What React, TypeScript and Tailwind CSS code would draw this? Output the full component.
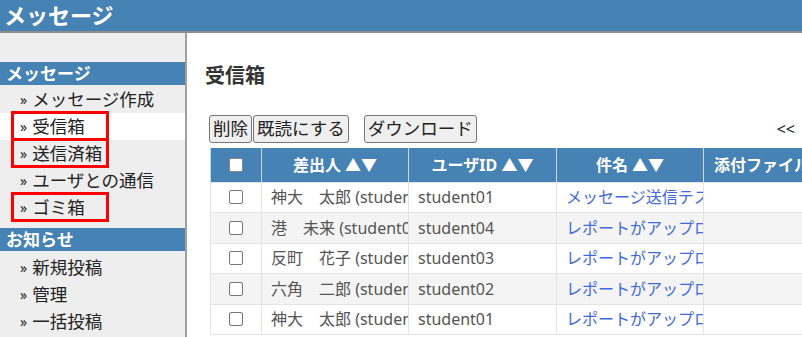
import React from 'react';

const font = { fontFamily: '"Noto Sans", "Noto Sans CJK JP", sans-serif' };

type NavItem = { label: string; active?: boolean; marked?: boolean };

const messageNav: NavItem[] = [
  { label: 'メッセージ作成' },
  { label: '受信箱', active: true, marked: true },
  { label: '送信済箱', marked: true },
  { label: 'ユーザとの通信' },
  { label: 'ゴミ箱', marked: true },
];

const noticeNav: NavItem[] = [{ label: '新規投稿' }, { label: '管理' }, { label: '一括投稿' }];

const rows = [
  { from: '神大　太郎 (student01)', id: 'student01', subject: 'メッセージ送信テスト' },
  { from: '港　未来 (student04)', id: 'student04', subject: 'レポートがアップロードされました' },
  { from: '反町　花子 (student03)', id: 'student03', subject: 'レポートがアップロードされました' },
  { from: '六角　二郎 (student02)', id: 'student02', subject: 'レポートがアップロードされました' },
  { from: '神大　太郎 (student01)', id: 'student01', subject: 'レポートがアップロードされました' },
];

function NavLink({ item }: { item: NavItem }) {
  return (
    <li className={`relative flex h-[27px] items-center pl-[20px] text-[17.5px] text-[#222] ${item.active ? 'bg-white' : ''}`}>
      <span className="mr-[5px] text-[14px]">»</span>
      <span>{item.label}</span>
      {item.marked && (
        <span className="pointer-events-none absolute left-[11px] top-[-2px] bottom-[-1px] w-[98px] border-[3px] border-[#ff0000]" />
      )}
    </li>
  );
}

function SideHeading({ children }: { children: React.ReactNode }) {
  return (
    <div className="flex h-[23px] items-center bg-[#4682b4] pl-[6px] text-[17px] font-bold text-white">
      {children}
    </div>
  );
}

const btn = 'h-[28px] rounded-[3px] border border-[#767676] bg-[#efefef] px-[3px] text-[17.5px] leading-none text-[#222]';

export default function App() {
  return (
    <div className="flex h-[337px] w-[802px] flex-col overflow-hidden bg-white" style={font}>
      <header className="flex h-[33px] shrink-0 items-center border-b-2 border-[#8c8c8c] bg-[#4682b4] pl-[4px] text-[22px] font-bold text-white">
        メッセージ
      </header>

      <div className="flex min-h-0 flex-1">
        {/* Sidebar */}
        <aside className="w-[187px] shrink-0 border-r-2 border-[#a0a0a0] bg-[#eeeeee] pt-[29px]">
          <SideHeading>メッセージ</SideHeading>
          <ul className="mt-[1px]">
            {messageNav.map(it => <NavLink key={it.label} item={it} />)}
          </ul>
          <div className="mt-[7px]">
            <SideHeading>お知らせ</SideHeading>
          </div>
          <ul className="mt-[3px]">
            {noticeNav.map(it => <NavLink key={it.label} item={it} />)}
          </ul>
        </aside>

        {/* Main */}
        <main className="min-w-0 flex-1 overflow-hidden pl-[18px] pt-[30px]">
          <h1 className="text-[20px] font-bold leading-[26px] text-[#333]">受信箱</h1>

          <div className="mt-[26px] flex items-center pl-[4px] pr-[7px]">
            <button className={btn}>削除</button>
            <button className={`ml-[1px] ${btn}`}>既読にする</button>
            <button className={`ml-[15px] ${btn}`}>ダウンロード</button>
            <span className="ml-auto text-[16px] text-[#222]">&lt;&lt;</span>
          </div>

          <table className="ml-[5px] mt-[5px] w-[740px] table-fixed border-collapse text-[16px]">
            <colgroup>
              <col className="w-[51px]" />
              <col className="w-[147px]" />
              <col className="w-[148px]" />
              <col className="w-[147px]" />
              <col className="w-[247px]" />
            </colgroup>
            <thead>
              <tr className="h-[34px] bg-[#4682b4] text-white">
                <th className="border-x border-[#c8d8e8]">
                  <span className="mx-auto block h-[14px] w-[14px] rounded-[2px] border border-[#888] bg-white" />
                </th>
                <th className="border-x border-[#c8d8e8] font-bold">差出人 ▲▼</th>
                <th className="border-x border-[#c8d8e8] font-bold">ユーザID ▲▼</th>
                <th className="border-x border-[#c8d8e8] font-bold">件名 ▲▼</th>
                <th className="overflow-hidden whitespace-nowrap border-x border-[#c8d8e8] pl-[10px] text-left font-bold">添付ファイル</th>
              </tr>
            </thead>
            <tbody>
              {rows.map((r, i) => (
                <tr key={i} className={`h-[30.5px] ${i % 2 === 1 ? 'bg-[#f4f4f4]' : 'bg-white'}`}>
                  <td className="border border-[#e4e4e4]">
                    <span className="mx-auto block h-[14px] w-[14px] rounded-[2px] border border-[#777] bg-white" />
                  </td>
                  <td className="overflow-hidden whitespace-nowrap border border-[#e4e4e4] pl-[9px] text-[#555]">{r.from}</td>
                  <td className="overflow-hidden whitespace-nowrap border border-[#e4e4e4] pl-[9px] text-[#555]">{r.id}</td>
                  <td className="overflow-hidden whitespace-nowrap border border-[#e4e4e4] pl-[9px] text-[#4169e1]">{r.subject}</td>
                  <td className="border border-[#e4e4e4]" />
                </tr>
              ))}
            </tbody>
          </table>
        </main>
      </div>
    </div>
  );
}
